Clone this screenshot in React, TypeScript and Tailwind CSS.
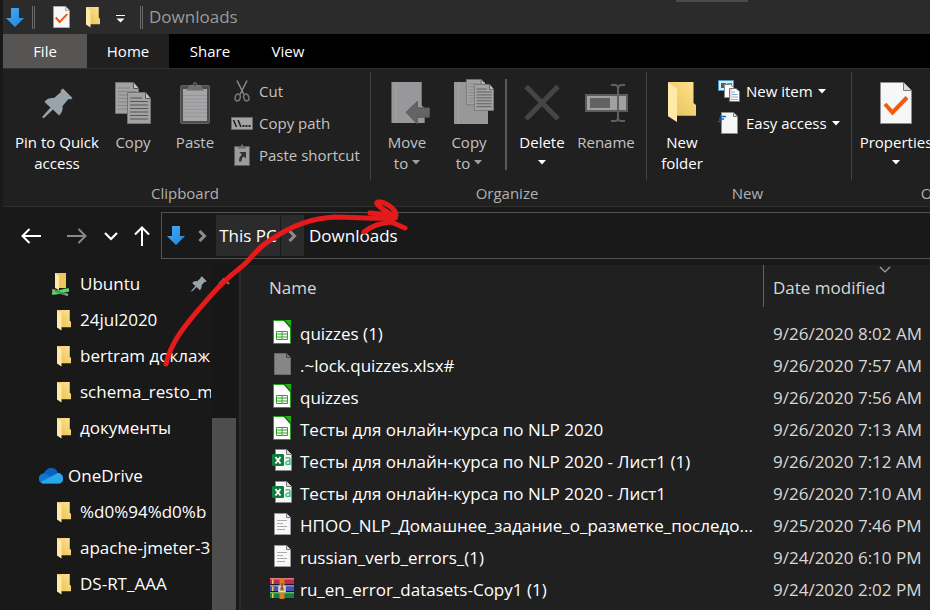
import type { ReactNode } from "react";

function DownArrow({ className }: { className: string }) {
  return (
    <svg viewBox="0 0 18 19" className={className} aria-hidden="true">
      <defs>
        <linearGradient id="blueArrow" x1="0" y1="0" x2="1" y2="1">
          <stop offset="0" stopColor="#4aa8f0" />
          <stop offset="1" stopColor="#1e86e0" />
        </linearGradient>
      </defs>
      <path d="M5 0h8v10h5l-9 9-9-9h5z" fill="url(#blueArrow)" />
    </svg>
  );
}

function Folder({ className }: { className: string }) {
  return (
    <svg viewBox="0 0 28 42" preserveAspectRatio="none" className={className} aria-hidden="true">
      <defs>
        <linearGradient id="folderBack" x1="0" y1="1" x2="1" y2="0">
          <stop offset="0" stopColor="#e6bf55" />
          <stop offset="1" stopColor="#ffe38f" />
        </linearGradient>
      </defs>
      <path d="M0 0h25.500v21.500l2.500 2v11H0z" fill="url(#folderBack)" />
      <path d="M0 0.500l9 6v34.500L0 35z" fill="#ffe9a8" />
    </svg>
  );
}

function CheckPage({ className }: { className: string }) {
  return (
    <svg viewBox="0 0 32 42" className={className} aria-hidden="true">
      <path d="M0.500 0.500h23l8 8v33h-31z" fill="#f6f7f9" stroke="#8d8d8d" />
      <path d="M23.500 0.500v8h8" fill="#dcdcdc" stroke="#777" />
      <path d="M5 22l7.500 8.500L27 15.500" fill="none" stroke="#f4590f" strokeWidth="4" />
    </svg>
  );
}

function Pin({ className }: { className: string }) {
  return (
    <svg viewBox="0 0 31 31" className={className} aria-hidden="true">
      <path
        d="M21 0.500l9.500 9.500-2 1.500-2-0.500-6 7c0.500 4-0.500 7-3.500 9.500l-6-6L2 30H0.500v-1.500L8.500 19.500l-6-5.500c2-3 5-4.500 9.500-4l7-6-0.500-1.500z"
        fill="#98a3aa"
      />
    </svg>
  );
}

function SheetShape({ x, y, lines }: { x: number; y: number; lines: string }) {
  return (
    <g transform={`translate(${x} ${y})`}>
      <path d="M0.500 0.500h18l5 6v25h-23z" fill="#a2a2a4" stroke="#747474" />
      <path d="M18.500 0.500v6h5" fill="#c4c4c4" stroke="#555" />
      <path d="M3 6h12M3 9.500h18M3 13h18M3 16.500h18M3 20h18M3 23.500h18M3 27h18" stroke={lines} />
    </g>
  );
}

function CopyIcon() {
  return (
    <svg viewBox="0 0 36 42" className="h-[42px] w-9" aria-hidden="true">
      <SheetShape x={0} y={0} lines="#858585" />
      <SheetShape x={12} y={10} lines="#555" />
    </svg>
  );
}

function PasteIcon() {
  return (
    <svg viewBox="0 0 30 42" className="h-[42px] w-[30px]" aria-hidden="true">
      <rect x="0.500" y="3.500" width="29" height="38" rx="1.500" fill="#4e4e4e" stroke="#626262" />
      <path d="M3 7h24v32H3z" fill="#a6a6a8" />
      <path d="M3 13.500h24M3 17h24M3 20.500h24M3 24h24M3 27.500h24M3 31h24M3 34.500h24" stroke="#969698" />
      <path d="M6 8.500l4-5h3c0-4 4-4 4 0h3l4 5z" fill="#6f6f6f" stroke="#8a8a8a" strokeWidth="0.500" />
      <circle cx="15" cy="2.500" r="1.200" fill="#3a3a3a" />
    </svg>
  );
}

function MoveToIcon() {
  return (
    <svg viewBox="0 0 39 43" className="ml-1.5 h-[42px] w-[39px]" aria-hidden="true">
      <path d="M0 0h31v24l3 3v15H0z" fill="#98989a" />
      <path d="M4.500 0.500v41" stroke="#a4a4a6" />
      <path d="M15 31L26.500 20v6.500H39v9.500H26.500V43z" fill="#646464" stroke="#555" />
    </svg>
  );
}

function CopyToIcon() {
  return (
    <svg viewBox="0 0 40 45" className="ml-2.5 h-[45px] w-10" aria-hidden="true">
      <path d="M0 3h31v24l3 3v15H0z" fill="#98989a" />
      <path d="M4.500 3.500v41" stroke="#a4a4a6" />
      <g transform="translate(12 0) scale(0.820)"><SheetShape x={0} y={0} lines="#858585" /></g>
      <g transform="translate(20 5) scale(0.840)"><SheetShape x={0} y={0} lines="#555" /></g>
    </svg>
  );
}

function DeleteIcon() {
  return (
    <svg viewBox="0 0 36 42" className="h-[42px] w-9" aria-hidden="true">
      <path d="M2 4.500l32 32.500M34 4.500L2 37" stroke="#454545" strokeWidth="5" />
    </svg>
  );
}

function RenameIcon() {
  return (
    <svg viewBox="0 0 43 42" className="h-[42px] w-[43px]" aria-hidden="true">
      <path d="M1 13h41v16H1z" fill="#a1a1a3" stroke="#5c5c5c" strokeWidth="2" />
      <path d="M5 16h20v10H5z" fill="#626262" />
      <path d="M26 3h4c2 0 3 2 3 4v29c0 2-1 3-3 3h-4M40 3h-3c-3 0-4 2-4 4M33 36c0 2 1 3 4 3h3" fill="none" stroke="#5f5f5f" strokeWidth="2" />
    </svg>
  );
}

function CutIcon() {
  return (
    <svg viewBox="0 0 16 22" className="h-[22px] w-4" aria-hidden="true">
      <path d="M3 0.500l7 14M13 0.500l-7 14" stroke="#8a8a8a" strokeWidth="1.500" />
      <ellipse cx="3.700" cy="17.500" rx="2.500" ry="3.500" transform="rotate(18 3.700 17.500)" fill="none" stroke="#777" strokeWidth="1.500" />
      <ellipse cx="12.300" cy="17.500" rx="2.500" ry="3.500" transform="rotate(-18 12.300 17.500)" fill="none" stroke="#777" strokeWidth="1.500" />
    </svg>
  );
}

function CopyPathIcon() {
  return (
    <svg viewBox="0 0 22 13" className="h-[13px] w-[22px]" aria-hidden="true">
      <path d="M0.500 0.500h21v12h-21z" fill="#a4a4a4" stroke="#6c6c6c" />
      <path d="M2.500 3l3 7M7 3l3 7" stroke="#222" strokeWidth="1.600" />
      <path d="M11.500 9h2M14.500 9h2M17.500 9h2" stroke="#222" strokeWidth="2" />
    </svg>
  );
}

function PasteShortcutIcon() {
  return (
    <svg viewBox="0 0 16 22" className="h-[22px] w-4" aria-hidden="true">
      <path d="M0.500 2.500h15v19h-15z" fill="#9c9c9c" stroke="#5c5c5c" />
      <path d="M3.500 4.500l2-2.500h1.500V0.500h2V2h1.500l2 2.500z" fill="#6b6b6b" />
      <path d="M12 8v6.500l-2.200-2c-1.600 1-2.300 2.500-2.300 5H5c0-3.500 0.800-5.300 2.800-6.800L5.500 8z" fill="#333" />
    </svg>
  );
}

function NewItemIcon() {
  return (
    <svg viewBox="0 0 22 22" className="h-[22px] w-[22px]" aria-hidden="true">
      <path d="M0.500 0.500h15v10h-15z" fill="#d5ecf8" stroke="#4c97bd" />
      <path d="M3 3h5v5H3z" fill="#47665c" />
      <path d="M9 3h5v3H9z" fill="#4c97bd" />
      <path d="M6.500 4.500h6l3 3v10h-9z" fill="#fff" stroke="#8a8a8a" />
      <path d="M11.500 8.500h6.500l3.500 3v10h-10z" fill="#fff" stroke="#777" />
      <path d="M14 12h3M14 14.500h6M14 17h6M14 19.500h6" stroke="#7fb0dc" />
      <path d="M13 9v12" stroke="#f0a0a0" />
    </svg>
  );
}

function EasyAccessIcon() {
  return (
    <svg viewBox="0 0 22 22" className="h-[22px] w-[22px]" aria-hidden="true">
      <path d="M3.500 0.500h12l4 4v17h-16z" fill="#f5f6f8" stroke="#8d8d8d" />
      <path d="M15.500 0.500v4h4" fill="#ddd" stroke="#777" />
      <path d="M2 4.500h6M1 7h5M0 9.500h4" stroke="#1565b5" strokeWidth="1.400" />
    </svg>
  );
}

function Caret({ className = "text-white" }: { className?: string }) {
  return (
    <svg viewBox="0 0 8 5" className={`inline-block h-[5px] w-2 shrink-0 ${className}`} aria-hidden="true">
      <path d="M0 0h8L4 4.500z" fill="currentColor" />
    </svg>
  );
}

function BigButton({ icon, width, tone = "text-[#c3c3c3]", children }: { icon: ReactNode; width: string; tone?: string; children: ReactNode }) {
  return (
    <button type="button" className={`flex shrink-0 flex-col items-center whitespace-nowrap pt-2.5 leading-[21px] ${width} ${tone}`}>
      <span className="flex h-[50px] items-start justify-center">{icon}</span>
      <span className="text-center">{children}</span>
    </button>
  );
}

function SmallButton({ icon, tone = "text-[#c3c3c3]", children }: { icon: ReactNode; tone?: string; children: ReactNode }) {
  return (
    <button type="button" className={`flex h-8 items-center gap-[5px] whitespace-nowrap ${tone}`}>
      <span className="flex w-6 justify-center">{icon}</span>
      {children}
    </button>
  );
}

function Group({ label, width, last = false, children }: { label: string; width: string; last?: boolean; children: ReactNode }) {
  return (
    <section aria-label={label} className={`flex shrink-0 flex-col ${width}`}>
      <div className={`flex h-[108px] ${last ? "" : "border-r border-[#424242]"}`}>{children}</div>
      <h2 className="pr-1 pt-px text-center leading-6 text-[#b0b0b0]">{label}</h2>
    </section>
  );
}

function Ribbon() {
  return (
    <div className="flex h-[139px] overflow-hidden border-y border-[#2e2e2e] bg-[#202020] pt-[3px] text-[15px]">
      <Group label="Clipboard" width="w-[368px]">
        <div className="flex pl-[9px]">
          <BigButton width="w-[90px]" tone="text-white" icon={<Pin className="mt-1.5 h-[31px] w-[31px]" />}>
            Pin to Quick<br />access
          </BigButton>
          <BigButton width="w-[62px]" icon={<CopyIcon />}>Copy</BigButton>
          <BigButton width="w-[62px]" icon={<PasteIcon />}>Paste</BigButton>
          <div className="flex flex-col pl-1 pt-[3px]">
            <SmallButton icon={<CutIcon />}>Cut</SmallButton>
            <SmallButton icon={<CopyPathIcon />}>Copy path</SmallButton>
            <SmallButton icon={<PasteShortcutIcon />}>Paste shortcut</SmallButton>
          </div>
        </div>
      </Group>
      <Group label="Organize" width="w-[276px]">
        <div className="flex pl-[5px]">
          <BigButton width="w-[62px]" icon={<MoveToIcon />}>
            Move<br />to <Caret className="mb-1 text-[#a0a0a0]" />
          </BigButton>
          <BigButton width="w-[62px]" icon={<span className="-mt-[3px]"><CopyToIcon /></span>}>
            Copy<br />to <Caret className="mb-1 text-[#a0a0a0]" />
          </BigButton>
          <div className="ml-[5px] mr-1 mt-[7px] h-[91px] w-0.5 bg-[#5a5a5a]" />
          <BigButton width="w-[62px]" tone="text-white" icon={<DeleteIcon />}>
            Delete<br /><Caret className="mb-1" />
          </BigButton>
          <BigButton width="w-[66px]" icon={<RenameIcon />}>Rename</BigButton>
        </div>
      </Group>
      <Group label="New" width="w-[205px]">
        <div className="flex pl-1">
          <BigButton width="w-[62px]" tone="text-white" icon={<Folder className="h-[41px] w-7" />}>
            New<br />folder
          </BigButton>
          <div className="flex flex-col pl-1 pt-[3px]">
            <SmallButton tone="text-white" icon={<NewItemIcon />}>New item <Caret /></SmallButton>
            <SmallButton tone="text-white" icon={<EasyAccessIcon />}>Easy access <Caret /></SmallButton>
          </div>
        </div>
      </Group>
      <Group label="Open" width="w-[180px]" last>
        <div className="flex pl-1.5">
          <BigButton width="w-[76px]" tone="text-white" icon={<CheckPage className="h-[42px] w-8" />}>
            Properties<br /><Caret className="mb-1" />
          </BigButton>
        </div>
      </Group>
    </div>
  );
}

function TitleBar() {
  return (
    <header className="relative flex h-[34px] items-center bg-[#2b2b2b]">
      <div className="absolute left-[673px] top-0 h-0.5 w-[72px] bg-[#4a4a4a]" />
      <DownArrow className="ml-[3px] h-[19px] w-[18px]" />
      <div className="ml-2 h-[23px] w-[3px] border-x border-[#6a6a6a]" />
      <button type="button" aria-label="Properties" className="ml-[18px]"><CheckPage className="h-[22px] w-[17px]" /></button>
      <button type="button" aria-label="New folder" className="ml-4"><Folder className="h-[21px] w-[14px]" /></button>
      <button type="button" aria-label="Customize Quick Access Toolbar" className="ml-4 pt-1 text-white">
        <svg viewBox="0 0 9 8" className="h-2 w-[9px]" aria-hidden="true">
          <path d="M0 0h9v1H0zM0.500 3.500h8l-4 4z" fill="currentColor" />
        </svg>
      </button>
      <div className="ml-[15px] h-[23px] w-[3px] border-x border-[#6a6a6a]" />
      <h1 className="ml-1.5 text-[17px] leading-6 text-[#9a9a9a]">Downloads</h1>
    </header>
  );
}

function Tabs() {
  return (
    <nav aria-label="Ribbon tabs" className="flex h-[34px] bg-black text-[15px] text-white">
      <button type="button" className="w-[84px] bg-[#575553]">File</button>
      <button type="button" className="w-[82px] bg-[#202020]">Home</button>
      <button type="button" className="w-[82px]">Share</button>
      <button type="button" className="w-[74px]">View</button>
    </nav>
  );
}

function Chevron() {
  return (
    <svg viewBox="0 0 9 12" className="h-3 w-[9px]" aria-hidden="true">
      <path d="M1.500 1l5 5-5 5" fill="none" stroke="#8e8e8e" strokeWidth="3" />
    </svg>
  );
}

function AddressBar() {
  return (
    <div className="flex h-[58px] items-start pt-[5px]">
      <div className="flex h-12 w-[158px] shrink-0 items-center pl-[18px] text-white">
        <button type="button" aria-label="Back">
          <svg viewBox="0 0 20 16" className="h-4 w-5" aria-hidden="true"><path d="M20 8H1.500M8.500 1l-7 7 7 7" fill="none" stroke="currentColor" strokeWidth="2" /></svg>
        </button>
        <button type="button" aria-label="Forward" className="ml-[26px] text-[#8a8a8a]">
          <svg viewBox="0 0 20 16" className="h-4 w-5" aria-hidden="true"><path d="M0 8h18.500M11.500 1l7 7-7 7" fill="none" stroke="currentColor" strokeWidth="2" /></svg>
        </button>
        <button type="button" aria-label="Recent locations" className="ml-[17px]">
          <svg viewBox="0 0 14 9" className="h-[9px] w-3.5" aria-hidden="true"><path d="M1 1l6 6 6-6" fill="none" stroke="currentColor" strokeWidth="2.200" /></svg>
        </button>
        <button type="button" aria-label="Up" className="ml-4">
          <svg viewBox="0 0 16 20" className="h-5 w-4" aria-hidden="true"><path d="M8 20V1.500M1 8.500l7-7 7 7" fill="none" stroke="currentColor" strokeWidth="2" /></svg>
        </button>
      </div>
      <div className="flex h-[47px] min-w-0 flex-1 items-center border border-r-0 border-[#535353] py-0.5 text-[17px] text-white">
        <DownArrow className="ml-[5px] h-[19px] w-[18px] shrink-0" />
        <span className="ml-[13px] mr-[9px]"><Chevron /></span>
        <button type="button" className="h-full w-[64px] whitespace-nowrap bg-[#2b2b2b]">This PC</button>
        <span className="ml-px flex h-full w-[23px] items-center justify-center bg-[#2b2b2b]"><Chevron /></span>
        <button type="button" className="ml-[5px]">Downloads</button>
      </div>
    </div>
  );
}

function UbuntuIcon() {
  return (
    <svg viewBox="0 0 18 23" className="h-[23px] w-[18px]" aria-hidden="true">
      <path d="M3 0h11v15H3z" fill="#eec661" />
      <path d="M3 0l4 3v14l-4-2z" fill="#ffe9a8" />
      <path d="M0 17l16 5" stroke="#919191" strokeWidth="2.500" />
      <path d="M0 20c5 1 9-3 17-3" stroke="#57d65f" strokeWidth="3.500" fill="none" />
      <path d="M3 18l10 3" stroke="#2e9b3a" strokeWidth="1.500" />
    </svg>
  );
}

function OneDriveIcon() {
  return (
    <svg viewBox="0 0 24 16" className="h-4 w-6" aria-hidden="true">
      <path d="M5 15.500C1.500 15.500 0 13 0 10.500 0 8 2 5.500 5 5.500 6 2 9 0 12.500 0c3.500 0 5.500 2 6.500 5 3 0 5 2.500 5 5.500 0 2.500-1.500 5-4.500 5z" fill="#0b62bd" />
      <path d="M5 15.500C1.500 15.500 0 13 0 10.500 0 8 2 5.500 5 5.500c2.500 0 4 1 5 2.500l5 2z" fill="#1276d3" />
      <path d="M2 14l9-5 4-2 4-2c3 0 5 2.500 5 5.500 0 2.500-1.500 5-4.500 5H5c-1.500 0-2.500-0.500-3-1.500z" fill="#28a8ea" />
    </svg>
  );
}

const pinned = ["24jul2020", "bertram доклаж", "schema_resto_m", "документы"];
const cloud = ["%d0%94%d0%b", "apache-jmeter-3", "DS-RT_AAA"];

function TreeItem({ children }: { children: ReactNode }) {
  return (
    <li>
      <a href="#folder" className="flex h-9 items-center whitespace-nowrap">
        <span className="flex w-7 shrink-0 items-center pl-[5px]"><Folder className="h-[21px] w-[14px]" /></span>
        {children}
      </a>
    </li>
  );
}

function Sidebar() {
  return (
    <aside className="flex w-[238px] shrink-0 border-r-2 border-[#2b2b2b] text-[17px] text-white">
      <nav aria-label="Folders" className="w-[208px] overflow-hidden pt-px">
        <ul className="pl-[49px]">
          <li>
            <a href="#ubuntu" className="flex h-9 items-center pr-1">
              <span className="flex w-7 shrink-0"><UbuntuIcon /></span>
              <span className="flex-1">Ubuntu</span>
              <Pin className="h-4 w-4" />
            </a>
          </li>
          {pinned.map((name) => <TreeItem key={name}>{name}</TreeItem>)}
        </ul>
        <a href="#onedrive" className="mt-3 flex h-9 items-center gap-[5px] pl-9"><OneDriveIcon />OneDrive</a>
        <ul className="pl-[49px]">
          {cloud.map((name) => <TreeItem key={name}>{name}</TreeItem>)}
        </ul>
      </nav>
      <div className="flex w-[26px] flex-col items-center bg-[#171717] pt-3">
        <svg viewBox="0 0 12 8" className="h-2 w-3" aria-hidden="true"><path d="M1 7l5-5 5 5" fill="none" stroke="#777" strokeWidth="2" /></svg>
        <div className="mt-[133px] w-6 flex-1 bg-[#4d4d4d]" />
      </div>
    </aside>
  );
}

type FileKind = "calc" | "lock" | "excel" | "text" | "rar";

function FileIcon({ kind }: { kind: FileKind }) {
  if (kind === "calc")
    return (
      <svg viewBox="0 0 18 24" className="h-6 w-[18px]" aria-hidden="true">
        <path d="M0.500 0.500h11l6 6v17h-17z" fill="#fff" stroke="#1fa50f" />
        <path d="M11 0h7v8z" fill="#24b014" />
        <path d="M11 0l7 8" stroke="#176b10" strokeWidth="1.500" />
        <path d="M3.500 11.500h11v8h-11zM3.500 14h11M3.500 17h11M9 11.500v8" fill="none" stroke="#26a81a" />
      </svg>
    );
  if (kind === "excel")
    return (
      <svg viewBox="0 0 20 22" className="h-[22px] w-5" aria-hidden="true">
        <path d="M3.500 0.500h11l5 5v16h-16z" fill="#f8f8f8" stroke="#8a8a8a" />
        <path d="M14.500 0.500v5h5" fill="#ddd" stroke="#777" />
        <rect x="0" y="5" width="12" height="12" rx="1" fill="#107c41" />
        <path d="M3.500 8l5 6.500M8.500 8l-5 6.500" stroke="#fff" strokeWidth="1.800" />
        <path d="M13.500 9c4-1 4.500 0 4.500 2v5M18 12c-5-0.500-5 4-2.500 3.500 1.500 0 2.500-1 2.500-2" fill="none" stroke="#33c481" strokeWidth="1.500" />
      </svg>
    );
  if (kind === "rar")
    return (
      <svg viewBox="0 0 24 21" className="h-[21px] w-6" aria-hidden="true">
        <path d="M0 0h24v7H0z" fill="#c2274c" />
        <path d="M0 0h24v1.500H0z" fill="#e4768f" />
        <path d="M0 7h24v7H0z" fill="#4a50b0" />
        <path d="M0 7h24v1.500H0z" fill="#8288d8" />
        <path d="M0 14h24v7H0z" fill="#16813a" />
        <path d="M0 14h24v1.500H0z" fill="#5ab868" />
        <path d="M2 1.500h1.500v5H2zM2 8.500h1.500v5H2zM2 15.500h1.500v5H2z" fill="#f2cf3d" />
        <path d="M0 6.500h24M0 13.500h24M0 20.500h24" stroke="#1d1830" />
        <path d="M9.500 0h5v21h-5z" fill="#d2812b" />
        <path d="M9 8.500h6v5H9z" fill="#b98a55" stroke="#ddd" strokeWidth="1.500" />
        <path d="M12 5v7" stroke="#8a4a14" strokeWidth="1.500" />
      </svg>
    );
  const lock = kind === "lock";
  return (
    <svg viewBox="0 0 17 22" className="h-[22px] w-[17px]" aria-hidden="true">
      <path d="M0.500 0.500h12l4 4v17h-16z" fill={lock ? "#868686" : "#f7f7f7"} stroke={lock ? "#6a6a6a" : "#999"} />
      <path d="M12.500 0.500v4h4" fill={lock ? "#777" : "#ddd"} stroke={lock ? "#444" : "#777"} />
      {!lock && <path d="M3 7.500h10M3 10.500h6M3 13.500h10M3 16.500h8" stroke="#adadad" />}
    </svg>
  );
}

const files: { kind: FileKind; name: string; date: string }[] = [
  { kind: "calc", name: "quizzes (1)", date: "9/26/2020 8:02 AM" },
  { kind: "lock", name: ".~lock.quizzes.xlsx#", date: "9/26/2020 7:57 AM" },
  { kind: "calc", name: "quizzes", date: "9/26/2020 7:56 AM" },
  { kind: "calc", name: "Тесты для онлайн-курса по NLP 2020", date: "9/26/2020 7:13 AM" },
  { kind: "excel", name: "Тесты для онлайн-курса по NLP 2020 - Лист1 (1)", date: "9/26/2020 7:12 AM" },
  { kind: "excel", name: "Тесты для онлайн-курса по NLP 2020 - Лист1", date: "9/26/2020 7:10 AM" },
  { kind: "text", name: "НПОО_NLP_Домашнее_задание_о_разметке_последо...", date: "9/25/2020 7:46 PM" },
  { kind: "text", name: "russian_verb_errors_(1)", date: "9/24/2020 6:10 PM" },
  { kind: "rar", name: "ru_en_error_datasets-Copy1 (1)", date: "9/24/2020 2:02 PM" },
  { kind: "rar", name: "", date: "" },
];

function FileList() {
  return (
    <main className="min-w-0 flex-1 overflow-hidden bg-[#202020]">
      <table className="w-full table-fixed border-collapse text-left text-[17px]">
        <colgroup>
          <col className="w-[523px]" />
          <col />
        </colgroup>
        <thead className="text-[#d8d8d8]">
          <tr className="h-[53px] align-top">
            <th className="p-0 font-normal">
              <div className="flex h-[42px] items-center border-r border-[#636363] pl-7 pt-1">Name</div>
            </th>
            <th className="relative whitespace-nowrap p-0 font-normal">
              <svg viewBox="0 0 12 7" className="absolute left-[115px] top-px h-[7px] w-3" aria-hidden="true">
                <path d="M1 1l5 5 5-5" fill="none" stroke="#a5a5a5" strokeWidth="1.200" />
              </svg>
              <div className="flex h-[42px] items-center pl-[9px] pt-1">Date modified</div>
            </th>
          </tr>
        </thead>
        <tbody className="whitespace-nowrap">
          {files.map((file, i) => (
            <tr key={i} className="h-8">
              <td className="p-0 text-white">
                <div className="flex h-8 items-center">
                  <span className="ml-7 flex w-[31px] shrink-0 pb-1">
                    <span className="flex w-[26px] justify-center"><FileIcon kind={file.kind} /></span>
                  </span>
                  {file.name}
                </div>
              </td>
              <td className="p-0 pl-[9px] text-[#d8d8d8]">{file.date}</td>
            </tr>
          ))}
        </tbody>
      </table>
    </main>
  );
}

function RedArrow() {
  return (
    <svg viewBox="0 0 420 380" className="pointer-events-none absolute left-0 top-0 h-[380px] w-[420px]" aria-hidden="true">
      <g fill="none" stroke="#e51b1b" strokeLinecap="round" strokeLinejoin="round">
        <path d="M166 364C171 342 184 327 200 308C213 293 224 280 240 268C252 259 255 249 272 239C291 226 313 218 335 217C355 217 374 219 392 218" strokeWidth="5" />
        <path d="M370 213L392 215C384 210 373 203 378 202C386 201 396 210 396 215C396 218 389 219 389 219" strokeWidth="5" />
        <path d="M364 232C371 226 382 223 391 222C396 224 400 226 405 228" strokeWidth="5" />
        <path d="M387 213l9 5-8 4" strokeWidth="4" />
      </g>
    </svg>
  );
}

export default function App() {
  return (
    <div className="relative flex h-screen w-full flex-col overflow-hidden bg-[#191919] pl-[3px] font-['Open_Sans','Noto_Sans',sans-serif]">
      <TitleBar />
      <Tabs />
      <Ribbon />
      <AddressBar />
      <div className="flex min-h-0 flex-1">
        <Sidebar />
        <FileList />
      </div>
      <RedArrow />
    </div>
  );
}
